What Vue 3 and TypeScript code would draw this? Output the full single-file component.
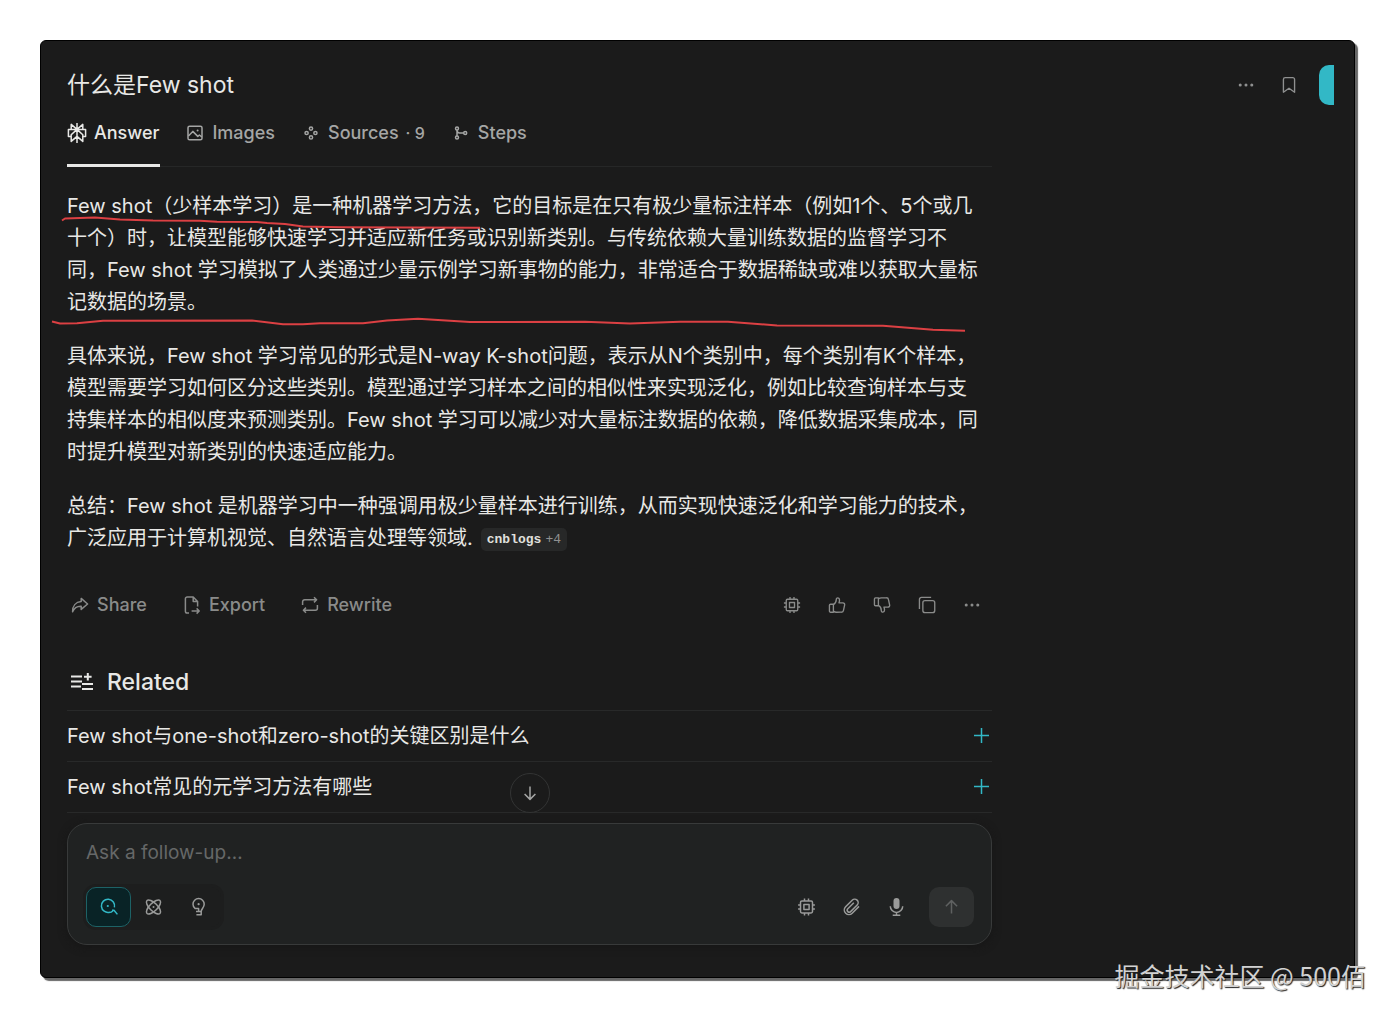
<script setup lang="ts">
import { ref } from 'vue'

interface Tab {
  id: string
  label: string
  count?: number
}

const tabs: Tab[] = [
  { id: 'answer', label: 'Answer' },
  { id: 'images', label: 'Images' },
  { id: 'sources', label: 'Sources', count: 9 },
  { id: 'steps', label: 'Steps' },
]
const activeTab = ref('answer')

const paragraphs: string[][] = [
  [
    'Few shot（少样本学习）是一种机器学习方法，它的目标是在只有极少量标注样本（例如1个、5个或几',
    '十个）时，让模型能够快速学习并适应新任务或识别新类别。与传统依赖大量训练数据的监督学习不',
    '同，Few shot 学习模拟了人类通过少量示例学习新事物的能力，非常适合于数据稀缺或难以获取大量标',
    '记数据的场景。',
  ],
  [
    '具体来说，Few shot 学习常见的形式是N-way K-shot问题，表示从N个类别中，每个类别有K个样本，',
    '模型需要学习如何区分这些类别。模型通过学习样本之间的相似性来实现泛化，例如比较查询样本与支',
    '持集样本的相似度来预测类别。Few shot 学习可以减少对大量标注数据的依赖，降低数据采集成本，同',
    '时提升模型对新类别的快速适应能力。',
  ],
  [
    '总结：Few shot 是机器学习中一种强调用极少量样本进行训练，从而实现快速泛化和学习能力的技术，',
    '广泛应用于计算机视觉、自然语言处理等领域.',
  ],
]

const related: string[] = [
  'Few shot与one-shot和zero-shot的关键区别是什么',
  'Few shot常见的元学习方法有哪些',
]

const mode = ref('search')
const question = ref('')
</script>

<template>
  <div class="page">
    <main class="panel">
      <header class="header">
        <h1 class="title">什么是Few shot</h1>
        <div class="header-actions">
          <button class="icon-btn" type="button" aria-label="More">
            <svg class="icon" viewBox="0 0 20 20"><g class="solid"><circle cx="3.600" cy="10" r="1.700" /><circle cx="10" cy="10" r="1.700" /><circle cx="16.400" cy="10" r="1.700" /></g></svg>
          </button>
          <button class="icon-btn" type="button" aria-label="Bookmark">
            <svg class="icon" viewBox="0 0 20 20"><path d="M3.800 18V3.800a2 2 0 0 1 2-2h8.400a2 2 0 0 1 2 2V18L10 13.600z" /></svg>
          </button>
          <button class="share-edge" type="button" aria-label="Share thread"></button>
        </div>
      </header>

      <div class="column">
        <nav class="tabs">
          <button
            v-for="tab in tabs"
            :key="tab.id"
            type="button"
            class="tab"
            :class="{ active: activeTab === tab.id }"
            @click="activeTab = tab.id"
          >
            <svg v-if="tab.id === 'answer'" class="icon" viewBox="0 0 20 20">
              <path d="M10 0v20M10 6.4 4.2 1.4v5M10 6.4l5.8-5v5M4.2 13.4H1.4V6.4h17.2v7h-2.8M10 6.4l-5.8 5.4v6.6l5.8-5M10 6.4l5.8 5.4v6.6l-5.8-5" />
            </svg>
            <svg v-else-if="tab.id === 'images'" class="icon" viewBox="0 0 20 20">
              <rect x="3" y="3.2" width="14" height="13.6" rx="1.6" /><path d="m3.4 13 4.4-4.6 5 5 1.6-1.4 2.4 2" /><circle class="solid" cx="12.6" cy="7.4" r="1" />
            </svg>
            <svg v-else-if="tab.id === 'sources'" class="icon" viewBox="0 0 20 20">
              <circle cx="10" cy="5.6" r="1.6" /><circle cx="5.6" cy="10" r="1.6" /><circle cx="14.4" cy="10" r="1.6" /><circle cx="10" cy="14.4" r="1.6" />
            </svg>
            <svg v-else class="icon" viewBox="0 0 20 20">
              <circle cx="6" cy="5.6" r="1.5" /><circle cx="6" cy="14.4" r="1.5" /><circle cx="14.2" cy="10" r="1.5" /><path d="M6 7.1v5.8M6 7.4c.2 1.8 1 2.6 2.6 2.6h4.1" />
            </svg>
            <span>{{ tab.label }}</span>
            <span v-if="tab.count" class="count">· {{ tab.count }}</span>
          </button>
        </nav>

        <article class="answer">
          <p v-for="(lines, p) in paragraphs" :key="p">
            <template v-for="(line, i) in lines" :key="i"><br v-if="i > 0" />{{ line }}</template>
            <a v-if="p === paragraphs.length - 1" class="citation" href="#">cnblogs<span>+4</span></a>
          </p>
          <svg class="strokes" viewBox="40 190 960 150" aria-hidden="true">
            <path d="M62 220.5 65 218.5 95 217.5 120 219.5 153 220.5 200 220.7 217 221.7 257 222 267 223 285 224 303 226.5 340 227.3 480 227.7" />
            <path d="M52 321.5 60 323.5 77 323.3 103 320.7 252 320.5 283 324.3 303 324.3 320 323.3 363 323.3 387 320.5 418 318.7 470 322 585 321.7 630 323.5 680 321.7 728 321.7 777 325.5 883 325.7 933 329.7 965 330.7" />
          </svg>
        </article>

        <div class="actions">
          <button class="text-btn" type="button">
            <svg class="icon" viewBox="0 0 20 20"><path d="M11.2 3.4 17.6 9l-6.4 5.4v-3.2C6.800 11 4 13.200 2.600 16.800 2.400 11 5.800 7 11.200 6.600z" /></svg>
            Share
          </button>
          <button class="text-btn" type="button">
            <svg class="icon" viewBox="0 0 20 20"><path d="M7 18H5.200a1.800 1.800 0 0 1-1.800-1.800V3.800A1.800 1.800 0 0 1 5.200 2h6l4.400 4.600v5M11.200 2v4.600h4.400M9.600 16h7.400M14.600 13.400 17.200 16l-2.600 2.600" /></svg>
            Export
          </button>
          <button class="text-btn" type="button">
            <svg class="icon" viewBox="0 0 20 20"><path d="M2.600 10V6.800a2 2 0 0 1 2-2h12M14 2.200l2.600 2.600L14 7.400M17.400 10v3.200a2 2 0 0 1-2 2h-12M6 12.600l-2.600 2.600L6 17.800" /></svg>
            Rewrite
          </button>
          <div class="feedback">
            <button class="icon-btn" type="button" aria-label="Model">
              <svg class="icon" viewBox="0 0 20 20"><rect x="3.600" y="3.600" width="12.800" height="12.800" rx="1.400" /><rect x="7.200" y="7.200" width="5.600" height="5.600" /><path d="M7.800 3.600V1M12.200 3.600V1M7.800 19v-2.600M12.200 19v-2.600M3.600 7.800H1M3.600 12.200H1M19 7.800h-2.600M19 12.200h-2.600" /></svg>
            </button>
            <button class="icon-btn" type="button" aria-label="Helpful">
              <svg class="icon" viewBox="0 0 20 20"><path d="M6 18V9.200H2.800a1.200 1.200 0 0 0-1.200 1.200v6.400A1.200 1.200 0 0 0 2.800 18zM6 9.600C8.600 8.200 9.200 6.400 9.200 4c0-2.800 3.600-2.600 3.600.4 0 1.400-.2 2.200-.6 3.200h4.400a1.900 1.900 0 0 1 1.900 2.300l-1.300 6A2.400 2.400 0 0 1 14.800 18H9.400C7.800 18 7 17.600 6 16.800" /></svg>
            </button>
            <button class="icon-btn" type="button" aria-label="Not helpful">
              <svg class="icon" viewBox="0 0 20 20"><path d="M6 2v8.800H2.800a1.200 1.200 0 0 1-1.200-1.200V3.200A1.200 1.200 0 0 1 2.800 2zM6 10.400c2.600 1.400 3.200 3.200 3.200 5.600 0 2.800 3.600 2.600 3.600-.4 0-1.400-.2-2.200-.6-3.200h4.400a1.900 1.900 0 0 0 1.900-2.300l-1.300-6A2.400 2.400 0 0 0 14.800 2H9.400C7.800 2 7 2.400 6 3.200" /></svg>
            </button>
            <button class="icon-btn" type="button" aria-label="Copy">
              <svg class="icon" viewBox="0 0 20 20"><rect x="5.400" y="5.200" width="13.200" height="13.200" rx="2.400" /><path d="M1.600 14.400V3.800a2.200 2.200 0 0 1 2.200-2.200h10.800" /></svg>
            </button>
            <button class="icon-btn" type="button" aria-label="More options">
              <svg class="icon" viewBox="0 0 20 20"><g class="solid"><circle cx="3.600" cy="10" r="1.700" /><circle cx="10" cy="10" r="1.700" /><circle cx="16.400" cy="10" r="1.700" /></g></svg>
            </button>
          </div>
        </div>

        <section class="related">
          <h2>
            <svg class="related-icon" viewBox="0 0 24 20"><path d="M1 4.500h11M1 9.500h11M1 14.500h10M12 12h11M12 17h11M17.800 1v7.600M14 4.800h7.600" /></svg>
            Related
          </h2>
          <ul>
            <li v-for="item in related" :key="item">
              <button type="button">
                <span>{{ item }}</span>
                <svg class="plus" viewBox="0 0 20 20"><path d="M9.500 2v15M2 9.500h15" /></svg>
              </button>
            </li>
          </ul>
        </section>

        <div class="composer-wrap">
          <button class="scroll-down" type="button" aria-label="Scroll to bottom">
            <svg class="icon" viewBox="0 0 20 20"><path d="M10 3.500v12.800M4.600 11l5.400 5.400 5.400-5.400" /></svg>
          </button>
          <form class="composer" @submit.prevent>
            <input v-model="question" type="text" placeholder="Ask a follow-up…" aria-label="Ask a follow-up" />
            <div class="toolbar">
              <div class="modes">
                <button type="button" aria-label="Search" :class="{ on: mode === 'search' }" @click="mode = 'search'">
                  <svg class="icon" viewBox="0 0 20 20"><path d="M10.600 15.200A6.600 6.600 0 1 1 15.400 10.400M10 15.600c2 0 3-.6 4-1.800M13 13.200h2l3.400 4.200" /><circle class="solid" cx="8.800" cy="9" r="1.100" /></svg>
                </button>
                <button type="button" aria-label="Research" :class="{ on: mode === 'research' }" @click="mode = 'research'">
                  <svg class="icon" viewBox="0 0 20 20"><ellipse cx="9.500" cy="10" rx="9.200" ry="3.900" transform="rotate(45 9.500 10)" /><ellipse cx="9.500" cy="10" rx="9.200" ry="3.900" transform="rotate(-45 9.500 10)" /><circle class="solid" cx="9.500" cy="10" r="1" /></svg>
                </button>
                <button type="button" aria-label="Labs" :class="{ on: mode === 'labs' }" @click="mode = 'labs'">
                  <svg class="icon" viewBox="0 0 20 20"><path d="M7 14.400h5.200c0-2.400 3-3.800 3-7.200a5.600 5.600 0 0 0-11.200 0c0 2.200.8 3.400 2.200 4.400h3.400v2.600M7.400 17.800h4.800v-3.200" /><circle class="solid" cx="9.600" cy="7.200" r="1.100" /></svg>
                </button>
              </div>
              <div class="tools">
                <button class="tool" type="button" aria-label="Choose model">
                  <svg class="icon" viewBox="0 0 20 20"><rect x="3.500" y="4" width="12" height="12" rx="1.400" /><rect x="6.900" y="7.400" width="5.200" height="5.200" /><path d="M7.500 4V1.600M11.500 4V1.600M7.500 18.400V16M11.500 18.400V16M3.500 8H1.100M3.500 12H1.100M17.900 8h-2.400M17.900 12h-2.400" /></svg>
                </button>
                <button class="tool" type="button" aria-label="Attach">
                  <svg class="icon" viewBox="0 0 20 20"><path d="m17 9.400-6.800 6.800a4.500 4.500 0 0 1-6.600-6.400l6.600-6.600a3.400 3.400 0 0 1 5 4.800l-6.600 6.600a1.900 1.900 0 0 1-2.800-2.800l6-6" /></svg>
                </button>
                <button class="tool" type="button" aria-label="Dictate">
                  <svg class="icon" viewBox="0 0 20 20"><rect class="solid" x="6.500" y="1" width="6" height="11" rx="3" /><path d="M3.300 9.200a6.200 6.200 0 0 0 12.400 0M9.500 15.400v3M5.700 18.200h7.600" /></svg>
                </button>
                <button class="submit" type="submit" aria-label="Submit">
                  <svg class="icon" viewBox="0 0 20 20"><path d="M9.500 16.500V3.700M3.900 9.200l5.600-5.600 5.600 5.600" /></svg>
                </button>
              </div>
            </div>
          </form>
        </div>
      </div>
    </main>
    <div class="watermark">掘金技术社区 @ 500佰</div>
  </div>
</template>

<style>
body {
  margin: 0;
  background: #fff;
}
</style>

<style scoped>
.page {
  position: relative;
  box-sizing: border-box;
  min-height: 100vh;
  padding: 40px 39px 39px 40px;
  display: flex;
  font-family: Inter, "Noto Sans CJK SC", sans-serif;
  color: #e8e8e6;
}

.panel {
  box-sizing: border-box;
  flex: 1;
  min-width: 0;
  padding: 24px 20px 32px 26px;
  border: 1px solid #000;
  border-radius: 6px;
  background: #1b1b1b;
  box-shadow: 3px 3px 1px #666;
}

button {
  margin: 0;
  padding: 0;
  border: 0;
  background: none;
  color: inherit;
  font: inherit;
  cursor: pointer;
}

.icon {
  width: 20px;
  height: 20px;
  flex: none;
}

svg {
  display: block;
  fill: none;
  stroke: currentColor;
  stroke-width: 1.5;
  stroke-linejoin: round;
}

.solid {
  fill: currentColor;
  stroke: none;
}

.header {
  display: flex;
  align-items: center;
  justify-content: space-between;
  height: 40px;
}

.title {
  margin: 0;
  font-size: 23px;
  line-height: 40px;
  font-weight: 400;
}

.header-actions {
  display: flex;
  align-items: center;
  color: #8f9090;
}

.icon-btn {
  display: flex;
  align-items: center;
  justify-content: center;
  width: 40px;
  height: 40px;
}

.header-actions .icon-btn {
  width: 43px;
}

.header-actions .icon,
.feedback .icon {
  width: 18px;
  height: 18px;
}

.share-edge {
  width: 15px;
  height: 40px;
  margin-left: 9px;
  border-radius: 10px 0 0 10px;
  background: #32b8c6;
}

.column {
  max-width: 925px;
}

.tabs {
  display: flex;
  gap: 25px;
  border-bottom: 1px solid #262727;
}

.tab {
  display: flex;
  align-items: center;
  gap: 7px;
  margin-bottom: -1px;
  padding: 16px 1px 19px 0;
  border-bottom: 3px solid transparent;
  font-size: 18px;
  line-height: 24px;
  font-weight: 500;
  color: #a5a6a5;
}

.tab.active {
  color: #e8e8e6;
  border-bottom-color: #e8e8e6;
}

.count {
  font-size: 16px;
}

.answer {
  position: relative;
  margin-top: 23px;
  display: flex;
  flex-direction: column;
  gap: 22px;
  font-size: 20px;
  line-height: 32px;
}

.answer p {
  margin: 0;
  white-space: nowrap;
}

.citation {
  display: inline-block;
  margin-left: 8px;
  padding: 0 6px;
  border-radius: 5px;
  background: #272828;
  color: #e0e0de;
  font: 700 13px/23px "Liberation Mono", monospace;
  text-decoration: none;
  vertical-align: 2px;
}

.citation span {
  margin-left: 4px;
  font-weight: 400;
  color: #8f9090;
}

.strokes {
  position: absolute;
  top: 0;
  left: -27px;
  width: 960px;
  height: 150px;
  color: #dc4043;
  stroke-width: 2;
  pointer-events: none;
}

.actions {
  display: flex;
  align-items: center;
  gap: 35px;
  margin-top: 31px;
  padding-left: 3px;
  color: #8a8b8a;
}

.text-btn {
  display: flex;
  align-items: center;
  gap: 7px;
  height: 40px;
  font-size: 18px;
  line-height: 24px;
  font-weight: 500;
}

.feedback {
  display: flex;
  gap: 5px;
  margin-left: auto;
}

.related {
  margin-top: 41px;
}

.related h2 {
  display: flex;
  align-items: center;
  gap: 13px;
  margin: 0 0 12px;
  padding-left: 3px;
  font-size: 23px;
  line-height: 32px;
  font-weight: 500;
}

.related-icon {
  width: 24px;
  height: 20px;
  stroke-width: 2;
}

.related ul {
  margin: 0;
  padding: 0;
  list-style: none;
  border-top: 1px solid #282929;
}

.related li {
  border-bottom: 1px solid #282929;
}

.related li button {
  display: flex;
  align-items: center;
  justify-content: space-between;
  width: 100%;
  height: 50px;
  font-size: 20px;
  line-height: 32px;
  text-align: left;
}

.plus {
  width: 20px;
  height: 20px;
  color: #32b8c6;
}

.composer-wrap {
  position: relative;
  margin-top: 10px;
}

.scroll-down {
  position: absolute;
  top: -50px;
  left: calc(50% - 20px);
  display: flex;
  align-items: center;
  justify-content: center;
  width: 40px;
  height: 40px;
  border: 1px solid #333434;
  border-radius: 50%;
  background: #1b1b1b;
  color: #a5a6a5;
}

.composer {
  box-sizing: border-box;
  padding: 15px 17px 17px 18px;
  border: 1px solid #383a3a;
  border-radius: 20px;
  background: #202222;
  box-shadow: 0 2px 8px #161616;
}

.composer input {
  display: block;
  box-sizing: border-box;
  width: 100%;
  height: 28px;
  margin: 0 0 20px;
  padding: 0;
  border: 0;
  outline: 0;
  background: none;
  color: #e8e8e6;
  font: 400 19px/28px Inter, "Noto Sans CJK SC", sans-serif;
}

.composer input::placeholder {
  color: #666868;
  opacity: 1;
}

.toolbar {
  display: flex;
  justify-content: space-between;
  color: #9a9b9a;
}

.modes {
  display: flex;
  border-radius: 10px;
  background: #1d1e1e;
  box-shadow: 0 0 0 3px #1d1e1e;
}

.modes button,
.tool,
.submit {
  box-sizing: border-box;
  display: flex;
  align-items: center;
  justify-content: center;
  width: 45px;
  height: 40px;
}

.modes button.on {
  border: 1px solid #1d6266;
  border-radius: 10px;
  background: #092326;
  color: #32b8c6;
}

.tools {
  display: flex;
}

.submit {
  margin-left: 10px;
  border-radius: 10px;
  background: #2e3030;
  color: #5f6161;
}

.watermark {
  position: absolute;
  right: 28px;
  bottom: 24px;
  font-family: "Noto Sans CJK SC", sans-serif;
  font-size: 25px;
  line-height: 36px;
  color: #d2d2d2;
  text-shadow: 1px 1px 1px #222;
}
</style>
